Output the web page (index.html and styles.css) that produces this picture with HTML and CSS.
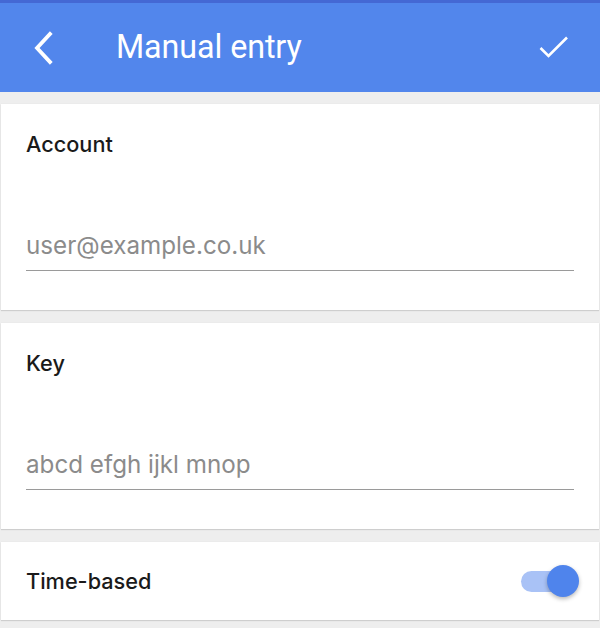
FILE: index.html
```html
<!DOCTYPE html>
<html>
<head>
<meta charset="utf-8">
<link rel="stylesheet" href="styles.css">
</head>
<body>
<div class="app">
  <header class="topbar">
    <button class="icon-btn back" aria-label="Back">
      <svg width="24" height="34" viewBox="0 0 24 34"><path d="M20 3 L7 17 L20 31" fill="none" stroke="#fff" stroke-width="3.8" stroke-linecap="square"/></svg>
    </button>
    <h1 class="title">Manual entry</h1>
    <button class="icon-btn check" aria-label="Save">
      <svg width="32" height="24" viewBox="0 0 32 24"><path d="M2.5 13 L10.5 21 L29 2.5" fill="none" stroke="#fff" stroke-width="2.6"/></svg>
    </button>
  </header>

  <main class="content">
    <section class="card field-card">
      <div class="label">Account</div>
      <div class="input"><span class="placeholder">user@example.co.uk</span></div>
    </section>
    <section class="card field-card">
      <div class="label">Key</div>
      <div class="input"><span class="placeholder">abcd efgh ijkl mnop</span></div>
    </section>
    <section class="card toggle-card">
      <div class="label">Time-based</div>
      <div class="switch"><span class="track"></span><span class="knob"></span></div>
    </section>
  </main>
</div>
</body>
</html>
```

FILE: styles.css
```css
html, body {
  margin: 0;
  padding: 0;
}
body {
  background: #eeeeee;
  font-family: "Inter", "Roboto", "Liberation Sans", sans-serif;
  width: 600px;
  height: 628px;
  overflow: hidden;
}
.topbar {
  height: 89px;
  background: #5286ec;
  border-top: 3px solid #4468d4;
  display: flex;
  align-items: center;
  padding: 0 0 0 30px;
  box-sizing: content-box;
}
.icon-btn {
  background: none;
  border: 0;
  padding: 0;
  display: flex;
  align-items: center;
  justify-content: center;
}
.back {
  width: 24px;
  height: 34px;
  margin-top: 0;
}
.title {
  margin: -1px 0 0 62px;
  font-family: "Roboto", "Liberation Sans", sans-serif;
  font-weight: 400;
  font-size: 32.3px;
  line-height: 38px;
  color: #fff;
  flex: 1;
  letter-spacing: -0.1px;
}
.check {
  width: 32px;
  height: 24px;
  margin-right: 30px;
  margin-top: -1px;
}
.content {
  padding-top: 12px;
  display: flex;
  flex-direction: column;
  gap: 13px;
}
.card {
  background: #fff;
  margin: 0 1px;
  box-shadow: 0 1px 1px rgba(0,0,0,0.12), 0 0 1px rgba(0,0,0,0.08);
  padding: 0 25px;
}
.field-card {
  height: 206px;
  display: flex;
  flex-direction: column;
}
.label {
  font-size: 21.7px;
  line-height: 26px;
  font-weight: 500;
  color: #1a1a1a;
}
.field-card .label {
  margin-top: 27px;
}
.input {
  margin-top: 75px;
  border-bottom: 1.5px solid #9a9a9a;
  padding-bottom: 10px;
}
.placeholder {
  display: block;
  font-size: 24.2px;
  line-height: 28px;
  color: #8b8b8b;
  font-weight: 400;
}
.toggle-card {
  height: 78px;
  display: flex;
  align-items: center;
  justify-content: space-between;
  padding-right: 20px;
}
.switch {
  position: relative;
  width: 58px;
  height: 34px;
}
.track {
  position: absolute;
  left: 0;
  top: 7px;
  width: 46px;
  height: 21px;
  border-radius: 11px;
  background: #a9c2f6;
}
.knob {
  position: absolute;
  right: 0;
  top: 1px;
  width: 32px;
  height: 32px;
  border-radius: 50%;
  background: #4f84ec;
  box-shadow: 0 2px 4px rgba(0,0,0,0.28);
}
```
